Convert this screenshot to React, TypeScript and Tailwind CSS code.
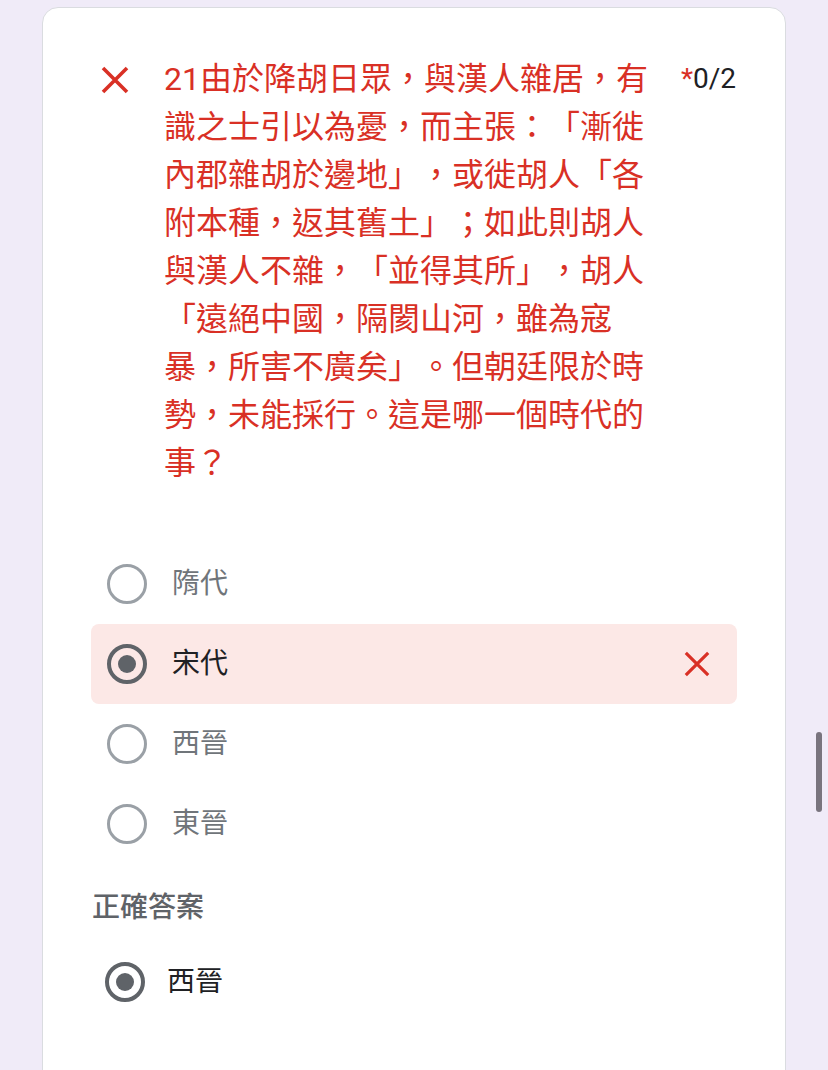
import React from "react";

const font = { fontFamily: '"Roboto", "Noto Sans CJK TC", sans-serif' };

function XIcon({ size = 30, stroke = 3.6 }: { size?: number; stroke?: number }) {
  return (
    <svg width={size} height={size} viewBox="0 0 30 30" fill="none">
      <path d="M3 3 L27 27 M27 3 L3 27" stroke="#d93025" strokeWidth={stroke} strokeLinecap="butt" />
    </svg>
  );
}

function Radio({ checked }: { checked?: boolean }) {
  if (checked) {
    return (
      <div className="flex h-[40px] w-[40px] shrink-0 items-center justify-center rounded-full border-[4px] border-[#5f6368]">
        <div className="h-[18px] w-[18px] rounded-full bg-[#5f6368]" />
      </div>
    );
  }
  return <div className="h-[40px] w-[40px] shrink-0 rounded-full border-[3px] border-[#9aa0a6]" />;
}

function Option({ label, selected, wrong }: { label: string; selected?: boolean; wrong?: boolean }) {
  return (
    <div
      className={
        "flex h-[80px] items-center rounded-lg pl-[16px] pr-[26px] " + (wrong ? "bg-[#fce8e6]" : "")
      }
    >
      <Radio checked={selected} />
      <span
        className={
          "ml-[25px] flex-1 text-[28px] leading-[36px] " + (selected ? "text-[#202124]" : "text-[#70757a]")
        }
      >
        {label}
      </span>
      {wrong && <XIcon size={28} stroke={3.4} />}
    </div>
  );
}

export default function App() {
  return (
    <div className="relative h-[1070px] w-[828px] overflow-hidden bg-[#f0ebf8]" style={font}>
      <div className="ml-[42px] mt-[7px] h-[1120px] w-[744px] rounded-2xl border border-[#dadce0] bg-white">
        <div className="flex items-start pl-[57px] pr-[49px] pt-[47px]">
          <div className="mt-[10px] shrink-0">
            <XIcon />
          </div>
          <div className="ml-[34px] w-[484px] text-[32px] leading-[48px] text-[#d93025] [text-spacing-trim:space-all]">
            21由於降胡日眾，與漢人雜居，有識之士引以為憂，而主張：「漸徙內郡雜胡於邊地」，或徙胡人「各附本種，返其舊土」；如此則胡人與漢人不雜，「並得其所」，胡人「遠絕中國，隔閡山河，雖為寇暴，所害不廣矣」。但朝廷限於時勢，未能採行。這是哪一個時代的事？
          </div>
          <div className="ml-auto text-[28px] leading-[48px] text-[#202124]">
            <span className="text-[#d93025]">*</span>0/2
          </div>
        </div>

        <div className="ml-[48px] mr-[48px] mt-[57px] flex flex-col">
          <Option label="隋代" />
          <Option label="宋代" selected wrong />
          <Option label="西晉" />
          <Option label="東晉" />
        </div>

        <div className="ml-[49px] mt-[26px] text-[28px] font-medium leading-[36px] text-[#5f6368]">正確答案</div>

        <div className="ml-[62px] mt-[36px] flex h-[40px] items-center">
          <Radio checked />
          <span className="ml-[22px] text-[28px] leading-[36px] text-[#202124]">西晉</span>
        </div>
      </div>

      <div className="absolute left-[816px] top-[732px] h-[80px] w-[6px] rounded-full bg-[#79747e]" />
    </div>
  );
}
